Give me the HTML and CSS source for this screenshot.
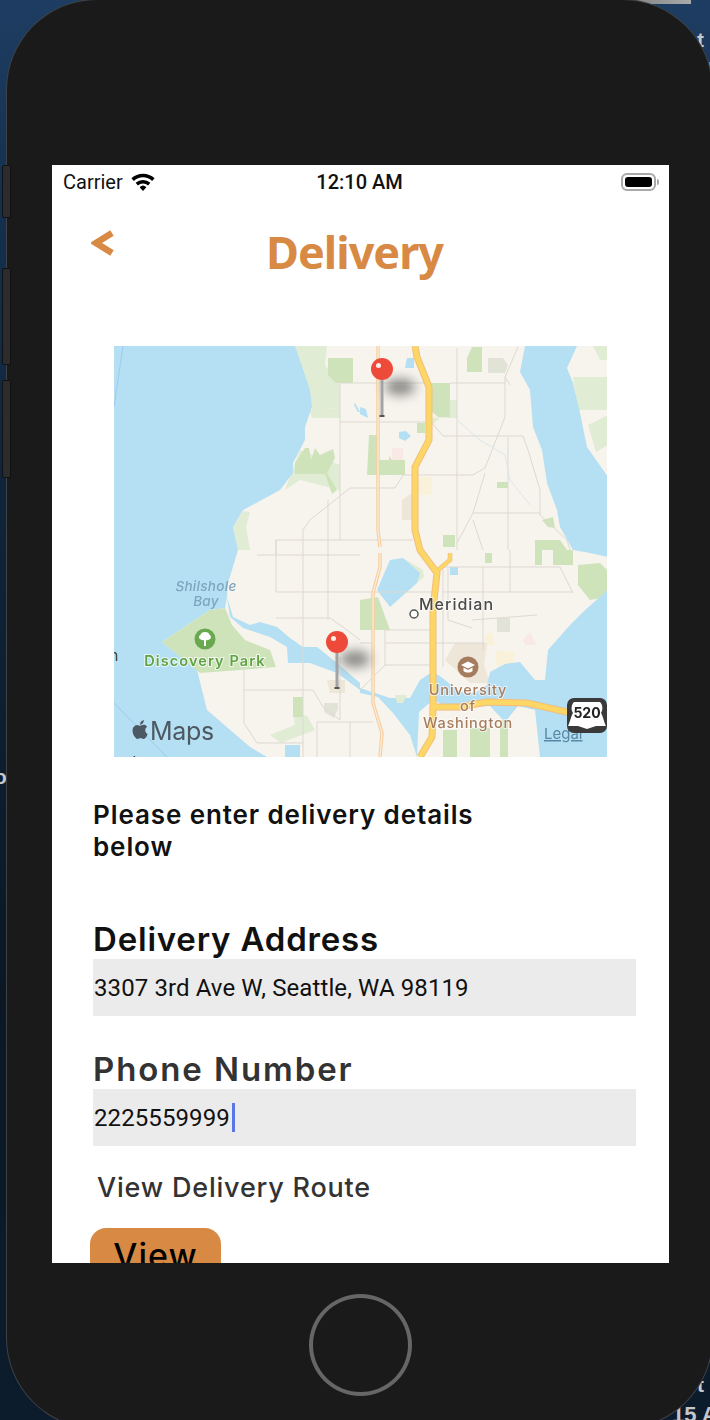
FILE: index.html
```html
<!DOCTYPE html>
<html lang="en">
<head>
<meta charset="utf-8">
<title>Delivery</title>
<link rel="stylesheet" href="styles.css">
</head>
<body>
<div class="desktop">
  <div class="topband"></div>
  <span class="frag frag-t1">t</span>
  <span class="frag frag-r">r</span>
  <span class="frag frag-o">o</span>
  <span class="frag frag-t2">t</span>
  <span class="frag frag-15">15 A</span>
  <div class="device">
    <div class="sidebtn btn-a"></div>
    <div class="sidebtn btn-b"></div>
    <div class="sidebtn btn-c"></div>
    <main class="screen">
      <div class="status">
        <div class="status-left">
          <span>Carrier</span>
          <svg class="wifi" viewBox="0 0 24 19" width="24" height="19"><path d="M12 19 8.6 15.2a5 5 0 0 1 6.8 0z"/><path d="M6.9 13.4 4.6 10.8a11 11 0 0 1 14.8 0l-2.3 2.6a7.6 7.6 0 0 0-10.2 0z"/><path d="M2.9 8.9.4 6.2a17 17 0 0 1 23.2 0l-2.5 2.7a13.4 13.4 0 0 0-18.2 0z"/></svg>
        </div>
        <div class="status-time">12:10 AM</div>
        <div class="status-right">
          <div class="battery"><div class="battery-fill"></div></div>
          <div class="battery-nub"></div>
        </div>
      </div>
      <header class="topbar">
        <svg class="back" viewBox="0 0 24 26" width="24" height="26"><path d="M21 3 5 13l16 10" /></svg>
        <h1 class="title">Delivery</h1>
      </header>
      <svg class="map" viewBox="114 346 493 411" width="493" height="411" role="img" aria-label="Map of north Seattle">
        <defs>
          <filter id="blur6" x="-60%" y="-80%" width="220%" height="260%"><feGaussianBlur stdDeviation="6"/></filter>
        </defs>
        <rect class="land" x="114" y="346" width="493" height="411"/>
        <!-- parks -->
        <path class="g-l" d="M295 346H327L325 365 340 385V408L312 410 310 390 300 365Z"/>
        <path class="g-l" d="M310 410 340 408V418L312 418Z"/>
        <path class="g-s" d="M328 358H353V383H336L328 375Z"/>
        <path class="g-l" d="M300 450 340 465V490L300 480 285 490Z"/>
        <path class="g-s" d="M295 463 305 448H309L311 460 315 448 320 455 333 449 335 458 327 473 337 490 332 494 325 474H295Z"/>
        <path class="g-l" d="M233 527 243 511 250 512 246 527 250 550H238Z"/>
        <path class="g-s" d="M467 358 472 347H482V372H467Z"/>
        <path class="g-x" d="M488 358H503L508 365 505 373H488Z"/>
        <path class="g-s" d="M430 383H450V417H438L430 410Z"/>
        <path class="g-l" d="M450 400H457V418H440L432 425 432 418 450 417Z"/>
        <path class="g-s" d="M369 435H377V460H389V456L392 460H405V475H367Z"/>
        <path class="g-s" d="M417 423H425V433H417Z"/>
        <path class="g-p" d="M392 448H403V460H392Z"/>
        <path class="g-c" d="M418 477H432V495H418Z"/>
        <path class="g-b" d="M402 500 410 494 416 495V520H402Z"/>
        <path class="g-s" d="M497 482H508V488H497Z"/>
        <path class="g-s" d="M443 535H455V547H443Z"/>
        <path class="g-l" d="M573 377H608V410H578Z"/>
        <path class="g-l" d="M593 346H608V360H600Z M588 425 608 415V445L596 452Z"/>
        <path class="g-s" d="M535 540H560L567 550H535Z"/>
        <path class="g-s" d="M542 520 553 517 555 528 548 527Z"/>
        <path class="g-s" d="M485 553H492V563H485Z M535 550H542V565H535Z M553 550H573V565H553Z"/>
        <path class="g-s" d="M578 565 600 563 607 570V597L590 600 578 585Z"/>
        <path class="g-s" d="M360 600 378 597 390 630H360Z"/>
        <path class="g-x" d="M497 618H510V632H497Z"/>
        <path class="g-c" d="M485 635 492 632 495 645H485Z"/>
        <path class="g-p" d="M523 640 530 632 537 645H525Z"/>
        <path class="g-b" d="M455 643H487L484 665 490 683 470 683 445 660Z"/>
        <path class="g-c" d="M497 650 515 652 512 665 500 672 495 662Z"/>
        <path class="g-x" d="M324 703H338V709L334 718 324 712Z"/>
        <path class="g-b" d="M327 680 345 680 345 693 330 693Z"/>
        <path class="g-l" d="M293 712 307 716 315 730 281 743 270 735 295 725Z"/>
        <path class="g-s" d="M293 697H303V717H293Z"/>
        <!-- water -->
        <path class="water" d="M114 346H295L310 390 312 407 305 427 305 440 293 463 293 473 280 490 243 510 233 527 238 550 228 583 227 597 225 608 210 610 162 642 197 670 207 710 250 747 267 757H114Z"/>
        <path class="g-s" d="M210 610 225 608 232 625 245 640 270 650 276 667 240 670 200 673 162 642Z"/>
        <path class="water" d="M227 597 233 617 250 625 260 622 277 627 290 638 303 647 317 647 337 663 360 683 360 690 337 673 310 663 288 663 287 647 270 637 243 628 230 617Z"/>
        <path class="water" d="M525 346H577L567 368 573 383 580 413 587 447 608 477V557L590 553 573 550 560 527 557 510 547 483 542 450 533 427 530 390 520 372Z"/>
        <path class="water" d="M360 688 390 698 410 698 420 680 432 672 440 676 460 692 475 693 487 685 490 672 505 664 520 662 535 680 545 680 548 650 570 625 585 610 608 590V757H417L410 735 393 713 378 697 360 693Z"/>
        <path class="land" d="M417 757 419 712 433 700 450 708 490 706 505 722 518 706 535 710 540 757Z"/>
        <path class="g-s" d="M443 730H457V757H443Z M500 720H508V757H500Z M470 728H490V757H470Z"/>
        <path class="g-l" d="M395 695H407L403 703 397 703Z"/>
        <path class="water" d="M390 560 403 558 423 573 417 583 390 607 377 590Z"/>
        <path class="g-l" d="M403 558 423 570 424 577 417 583 420 573Z"/>
        <path class="water" d="M399 432 406 431 411 436 405 441 399 438Z M407 358H414V368H405Z M360 407 366 409 368 418 360 414Z M355 403 360 412 358 412 354 405Z M450 567H458V575H450Z M285 745H300V757H285Z"/>
        <path class="blueline" d="M123 346 114 407 M114 703 167 757"/>
        <!-- roads -->
        <path class="road" d="M340 383V540 M340 383H428 M340 422H428 M450 383H505 M276 540H413 M303 530 310 520 350 488H395L403 475H473L485 468 505 417V377L518 347 M303 530V757 M328 500V620 M457 348V550 M432 423 443 436H523L528 450 540 490V515L567 540 570 550 M473 513H540 M473 513 457 543 M485 473 473 513 M473 520 483 550 M508 437V550 M340 720V657 M276 540V592H432 M276 618H330L343 627 360 640 M244 647V723L257 743H303 M244 690H313L323 707 340 720 M317 722H373 M317 722V757 M350 722V757 M385 630H432 M385 643H485 M385 665H432 M385 630V665 M360 643H373 M443 567H560L573 593 M483 567V650 M510 550V592 M443 592H573 M443 567V667 M448 567V620 M472 620 537 615 M448 620 472 628 M360 690 385 665 M505 377 510 385 M244 660 257 647 M257 555H360 M276 555V540"/>
        <path class="path-thin" d="M457 420 480 440 505 455 510 480 530 505"/>
        <path class="ar-o" d="M378 346V530L380 547M380 553V567L373 593V703L382 733 380 757"/>
        <path class="ar-i" d="M378 346V530L380 547M380 553V567L373 593V703L382 733 380 757"/>
        <path class="hw-o" d="M433 707H460L487 702 527 703 567 712 607 722"/>
        <path class="hw-o" d="M415 346 417 357 429 387V440L415 467V530L420 550 437 573 433 610V707L432 737 420 757"/>
        <path class="hw-o thin" d="M438 570 450 560V553"/>
        <path class="hw-i" d="M433 707H460L487 702 527 703 567 712 607 722"/>
        <path class="hw-i" d="M415 346 417 357 429 387V440L415 467V530L420 550 437 573 433 610V707L432 737 420 757"/>
        <path class="hw-i thin" d="M438 570 450 560V553"/>
        <!-- labels -->
        <text class="t-water" x="206" y="591" text-anchor="middle">Shilshole</text>
        <text class="t-water" x="206" y="606" text-anchor="middle">Bay</text>
        <circle class="ic-park" cx="205" cy="639" r="10.5"/>
        <path class="ic-white" d="M205 632c3 0 4.500 1.500 4.500 3 2 .5 2 4-.5 4.500-1 .8-2 .8-3 .4V646h-2v-6.100c-1 .4-2 .4-3-.4-2.500-.5-2.500-4-.5-4.500 0-1.500 1.500-3 4.500-3z"/>
        <text class="t-park" x="205" y="666" text-anchor="middle">Discovery Park</text>
        <text class="t-cut" x="109" y="661">n</text>
        <text class="t-cut" x="117" y="768">nd</text>
        <circle class="ic-place" cx="414" cy="614" r="4"/>
        <text class="t-place" x="419" y="610">Meridian</text>
        <circle class="ic-uni" cx="468" cy="667" r="10.5"/>
        <path class="ic-white" d="M468 661.500 475 665 468 668.500 461 665z"/>
        <path class="ic-white" d="M463.500 667.500V671c2.500 2 6.500 2 9 0v-3.500L468 670z"/>
        <text class="t-uni" x="468" y="695" text-anchor="middle">University</text>
        <text class="t-uni" x="468" y="711" text-anchor="middle">of</text>
        <text class="t-uni" x="468" y="728" text-anchor="middle">Washington</text>
        <path class="t-apple" transform="translate(129 718.500) scale(.93)" d="M18.710 19.500c-.83 1.240-1.710 2.450-3.050 2.470-1.340.03-1.770-.79-3.290-.79-1.530 0-2 .77-3.270.82-1.310.05-2.300-1.320-3.140-2.530C4.250 17 2.940 12.450 4.700 9.390c.87-1.520 2.430-2.480 4.120-2.510 1.280-.02 2.500.87 3.290.87.78 0 2.260-1.070 3.810-.91.65.03 2.470.26 3.640 1.980-.09.06-2.170 1.280-2.150 3.810.03 3.020 2.650 4.030 2.680 4.040-.03.07-.42 1.440-1.380 2.830M13 3.500c.73-.83 1.940-1.460 2.940-1.500.13 1.170-.34 2.350-1.040 3.190-.69.85-1.830 1.510-2.950 1.420-.15-1.150.41-2.350 1.050-3.110z"/>
        <text class="t-maps" x="150" y="740">Maps</text>
        <text class="t-legal" x="544" y="739">Legal</text>
        <rect class="sh-box" x="567" y="698" width="40" height="35" rx="7"/>
        <path class="ic-white" d="M574 702H600C603 705 603 710 601 713 603 716 604 722 606 726L596 726 587 729 578 726 568 726C570 722 571 716 573 713 571 710 571 705 574 702Z"/>
        <text class="t-shield" x="587" y="718" text-anchor="middle">520</text>
        <!-- pins -->
        <ellipse class="pin-shadow" cx="400" cy="387" rx="15" ry="8" filter="url(#blur6)"/>
        <rect class="pin-stem" x="380.500" y="380" width="3" height="36"/>
        <rect class="pin-foot" x="379.500" y="415" width="5" height="2"/>
        <circle class="pin-head" cx="382" cy="369" r="11"/>
        <circle class="pin-glint" cx="378.500" cy="365.500" r="2.500"/>
        <ellipse class="pin-shadow" cx="355" cy="659" rx="15" ry="8" filter="url(#blur6)"/>
        <rect class="pin-stem" x="335.500" y="652" width="3" height="36"/>
        <rect class="pin-foot" x="334.500" y="687" width="5" height="2"/>
        <circle class="pin-head" cx="337" cy="642" r="11"/>
        <circle class="pin-glint" cx="333.500" cy="638.500" r="2.500"/>
      </svg>
      <p class="intro">Please enter delivery details below</p>
      <label class="field-label first">Delivery Address</label>
      <div class="input">3307 3rd Ave W, Seattle, WA 98119</div>
      <label class="field-label second">Phone Number</label>
      <div class="input">2225559999<span class="caret"></span></div>
      <p class="route">View Delivery Route</p>
      <button class="view-btn">View</button>
    </main>
    <div class="chin"><div class="home"></div></div>
  </div>
</div>
</body>
</html>
```
FILE: styles.css
```css
html, body { margin: 0; padding: 0; height: 1420px; overflow: hidden; }
* { box-sizing: border-box; }

.desktop {
  position: relative;
  width: 710px;
  height: 1420px;
  overflow: hidden;
  padding-left: 7px;
  background: linear-gradient(180deg, #1e3d62 0%, #14304f 14%, #0f2236 40%, #0b1824 70%, #0c1c2c 100%);
  font-family: "Liberation Sans", sans-serif;
}
.topband { position: absolute; top: 0; left: 560px; width: 131px; height: 4px; background: linear-gradient(90deg, #555, #aaa); }
.frag { position: absolute; color: #c4c6c9; font-weight: 700; font-size: 21px; line-height: 24px; white-space: nowrap; }
.frag-t1 { left: 697px; top: 28px; }
.frag-r { left: 708px; top: 54px; }
.frag-o { left: -6px; top: 765px; }
.frag-t2 { left: 697px; top: 1373px; }
.frag-15 { left: 672px; top: 1403px; font-size: 22px; }

.device {
  position: relative;
  width: 705px;
  height: 1428px;
  border-radius: 90px;
  background: #1a1a1a;
  box-shadow: 0 0 0 1px #3d4247;
  padding: 165px 0 0 45px;
}
.sidebtn { position: absolute; left: -5px; width: 9px; background: #2c2c2c; border: 1px solid #111; border-radius: 2px; }
.btn-a { top: 165px; height: 53px; }
.btn-b { top: 268px; height: 97px; }
.btn-c { top: 380px; height: 98px; }

.screen {
  width: 617px;
  height: 1098px;
  overflow: hidden;
  background: #fff;
  color: #000;
  font-family: "Inter", "Liberation Sans", sans-serif;
}
.status {
  height: 34px;
  display: grid;
  grid-template-columns: 1fr auto 1fr;
  align-items: center;
  padding: 0 13px 0 11px;
  font-family: "Roboto", sans-serif;
  font-size: 20px;
  color: #111;
}
.status-left { display: flex; align-items: center; gap: 8px; }
.wifi { fill: #000; margin-top: -2px; }
.status-time { font-weight: 500; }
.status-right { display: flex; justify-content: flex-end; align-items: center; gap: 1px; }
.battery { width: 35px; height: 18px; border: 2px solid #a9a9a9; border-radius: 6px; padding: 2px; }
.battery-fill { width: 100%; height: 100%; background: #000; border-radius: 3px; }
.battery-nub { width: 2px; height: 6px; background: #a9a9a9; border-radius: 0 2px 2px 0; margin-right: -3px; }

.topbar {
  height: 147px;
  display: flex;
  align-items: flex-start;
  padding: 31px 0 0 39px;
}
.back { fill: none; stroke: #d88a45; stroke-width: 6.5; margin-top: 0; }
.title {
  margin: -3px 0 0 151px;
  font-family: "Noto Sans", sans-serif;
  font-weight: 700;
  font-size: 45px;
  line-height: 50px;
  color: #d88a45;
  letter-spacing: -1px;
}

.map { display: block; margin-left: 62px; filter: blur(.35px); }
.land { fill: #f7f4ee; }
.water { fill: #b5dff2; }
.g-s { fill: #cfe3bb; }
.g-l { fill: #e0ecd3; }
.g-x { fill: #e0e3d6; }
.g-p { fill: #f8e9e4; }
.g-c { fill: #f9f1da; }
.g-b { fill: #eee6d8; }
.blueline { fill: none; stroke: #9ccbef; stroke-width: 1; }
.road { fill: none; stroke: #dcd9d1; stroke-width: 1; }
.path-thin { fill: none; stroke: #dbe8ea; stroke-width: 1; }
.ar-o { fill: none; stroke: #f6cfa0; stroke-width: 3.5; }
.ar-i { fill: none; stroke: #fbeedd; stroke-width: 1.2; }
.hw-o { fill: none; stroke: #f3bd7a; stroke-width: 7; }
.hw-i { fill: none; stroke: #fdd765; stroke-width: 5; }
.hw-o.thin { stroke-width: 4.5; }
.hw-i.thin { stroke-width: 3; }
.map text { font-family: "Inter", "Liberation Sans", sans-serif; }
.t-water { fill: #7fa4bd; font-size: 13.5px; font-style: italic; font-weight: 500; letter-spacing: .3px; }
.t-park { fill: #5fa343; font-size: 14.5px; font-weight: 600; letter-spacing: 1.1px; stroke: #fff; stroke-width: 2; stroke-opacity: .7; paint-order: stroke; }
.t-cut { fill: #444; font-size: 16px; }
.t-place { fill: #4a4a4a; font-size: 16px; font-weight: 500; letter-spacing: 1px; stroke: #fff; stroke-width: 2; stroke-opacity: .7; paint-order: stroke; }
.t-uni { fill: #a67c5e; font-size: 14.5px; font-weight: 500; letter-spacing: .8px; stroke: #fff; stroke-width: 2; stroke-opacity: .6; paint-order: stroke; }
.t-maps { fill: #4d5962; font-size: 25px; font-weight: 400; letter-spacing: -.3px; }
.t-apple { fill: #4d5962; }
.t-legal { fill: #5b87a5; font-size: 15px; text-decoration: underline; }
.t-shield { fill: #222; font-size: 14px; font-weight: 700; }
.sh-box { fill: #3a3a3a; }
.ic-white { fill: #fff; }
.ic-park { fill: #6aa84f; }
.ic-uni { fill: #a67c5e; }
.ic-place { fill: #fff; stroke: #555; stroke-width: 1.5; }
.pin-shadow { fill: #555; opacity: .7; }
.pin-stem { fill: #a3a3a3; }
.pin-foot { fill: #555; }
.pin-head { fill: #ee4a3a; }
.pin-glint { fill: #fff; opacity: .9; }

.intro {
  width: 420px;
  margin: 42px 0 0 41px;
  font-weight: 600;
  font-size: 26px;
  line-height: 32px;
  letter-spacing: .9px;
  color: #111;
}
.field-label {
  display: block;
  margin-left: 41px;
  font-weight: 600;
  font-size: 33px;
  line-height: 40px;
  letter-spacing: .8px;
}
.first { margin-top: 56px; color: #111; }
.second { margin-top: 33px; color: #333; letter-spacing: 1.9px; }
.input {
  width: 543px;
  height: 57px;
  margin-left: 41px;
  padding-left: 1px;
  display: flex;
  align-items: center;
  background: #ebebeb;
  font-family: "Roboto", sans-serif;
  font-size: 24px;
  letter-spacing: .1px;
  color: #111;
}
.caret { width: 3px; height: 29px; margin-left: 2px; background: #5a77e8; }
.route {
  margin: 23px 0 0 45px;
  font-weight: 500;
  font-size: 27px;
  line-height: 38px;
  letter-spacing: .8px;
  color: #333;
}
.view-btn {
  display: block;
  width: 131px;
  height: 64px;
  margin: 21px 0 0 38px;
  padding: 0 0 9px;
  border: 0;
  border-radius: 16px;
  background: #d88a45;
  color: #000;
  font-family: "Inter", sans-serif;
  font-weight: 500;
  font-size: 34px;
  letter-spacing: 1px;
}
.chin { width: 617px; display: flex; justify-content: center; padding-top: 31px; }
.home { width: 103px; height: 102px; border-radius: 50%; border: 4px solid #666; }
```
